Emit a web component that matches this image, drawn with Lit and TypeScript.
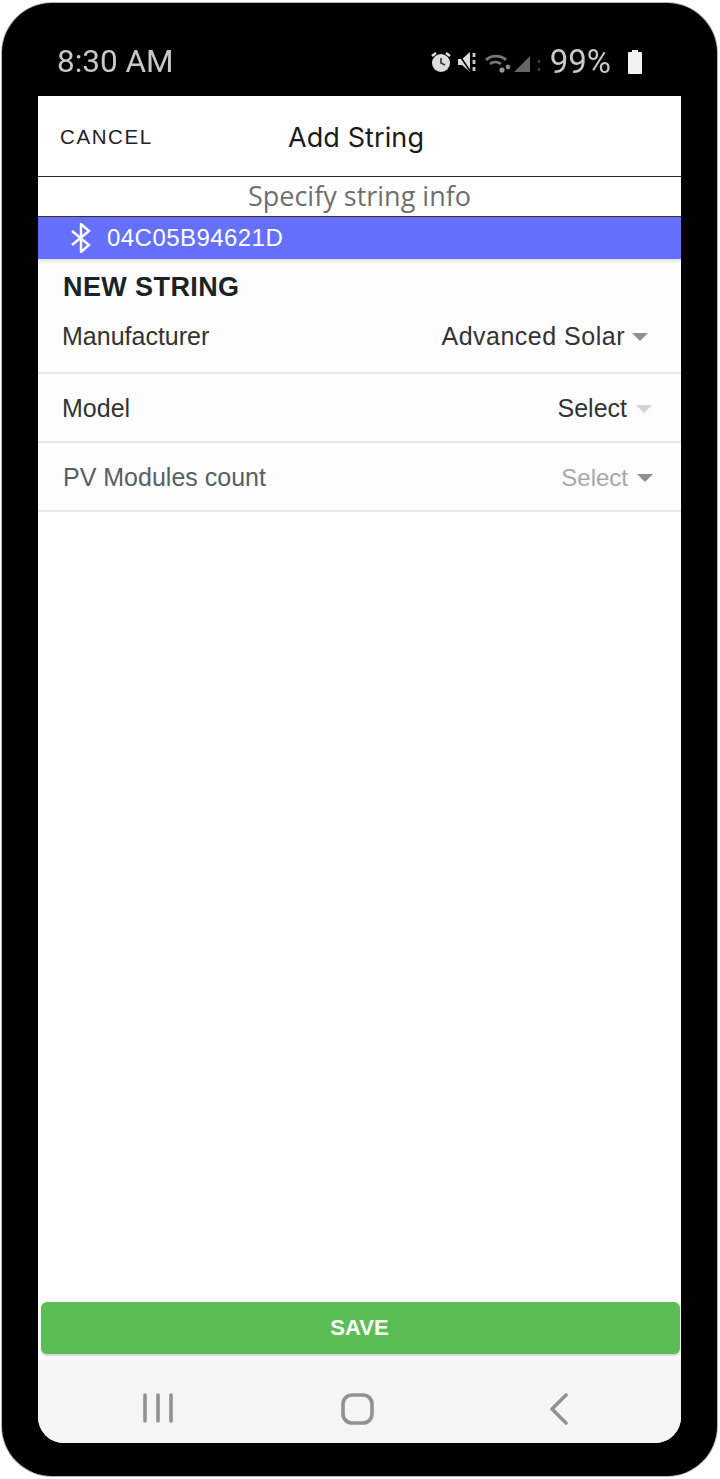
import { LitElement, css, html } from 'lit';
import { customElement } from 'lit/decorators.js';

interface FieldRow {
  label: string;
  value: string;
  kind: 'maker' | 'model' | 'count';
}

const ROWS: FieldRow[] = [
  { label: 'Manufacturer', value: 'Advanced Solar', kind: 'maker' },
  { label: 'Model', value: 'Select', kind: 'model' },
  { label: 'PV Modules count', value: 'Select', kind: 'count' },
];

@customElement('app-root')
export class AppRoot extends LitElement {
  static styles = css`
    :host {
      display: block;
      width: 720px;
      height: 1479px;
      background: #fff;
      font-family: 'Liberation Sans', Arial, sans-serif;
      overflow: hidden;
    }
    .phone {
      box-sizing: border-box;
      width: 715px;
      height: 1473px;
      margin: 3px 0 0 2px;
      padding: 0 36px 33px;
      display: flex;
      flex-direction: column;
      background: #000;
      border-radius: 50px;
      box-shadow: 0 0 0 1px #b5b5b5;
    }
    .status {
      flex: 0 0 93px;
      display: flex;
      align-items: center;
      justify-content: space-between;
      padding: 24px 38px 0 19px;
      box-sizing: border-box;
      color: #c8c8c8;
      filter: blur(0.7px);
    }
    .time {
      font: 400 31.5px Roboto, sans-serif;
    }
    .status-right {
      display: flex;
      align-items: center;
    }
    .status-right svg {
      display: block;
    }
    .pct {
      font: 400 33px Roboto, sans-serif;
      margin: 0 16px 0 5px;
    }
    .screen {
      flex: 1;
      display: flex;
      flex-direction: column;
      background: #fff;
      border-radius: 0 0 26px 26px;
      overflow: hidden;
      min-height: 0;
    }
    .top {
      flex: 0 0 80px;
      display: flex;
      align-items: center;
      position: relative;
      border-bottom: 1px solid #2a2a2a;
      box-sizing: content-box;
    }
    .cancel {
      margin: 2px 0 0 22px;
      font-size: 20.5px;
      letter-spacing: 1.6px;
      color: #222;
    }
    .title {
      position: absolute;
      left: 250px;
      top: 25px;
      font: 400 27px Inter, sans-serif;
      letter-spacing: 0.1px;
      color: #1b1b1b;
    }
    .hint {
      flex: 0 0 39px;
      text-align: center;
      font: 400 27px/38px 'Open Sans', sans-serif;
      color: #6f6f6f;
      border-bottom: 1px solid #333;
    }
    .device {
      flex: 0 0 42px;
      display: flex;
      align-items: center;
      gap: 15px;
      padding-left: 32px;
      background: #6571fe;
      color: #fff;
      font-size: 24px;
      letter-spacing: 0.45px;
      box-shadow: 0 2px 3px rgba(0, 0, 0, 0.12);
      position: relative;
    }
    .content {
      flex: 1;
      display: flex;
      flex-direction: column;
      min-height: 0;
    }
    h2 {
      margin: 0;
      padding: 13px 0 0 25px;
      height: 36px;
      box-sizing: content-box;
      font-size: 27px;
      line-height: 30px;
      font-weight: 700;
      letter-spacing: 0.4px;
      color: #1a2423;
      background: #fdfdfd;
    }
    .row {
      display: flex;
      align-items: center;
      justify-content: space-between;
      box-sizing: border-box;
      height: 69px;
      padding: 2px 29px 0 24px;
      border-bottom: 2px solid #e8e8e6;
      background: #fdfdfd;
      font-size: 25px;
      color: #333;
    }
    .row.maker {
      height: 66px;
      padding-top: 0;
      padding-bottom: 7px;
      padding-right: 33px;
    }
    .row.maker .val {
      letter-spacing: 0.5px;
      gap: 7px;
    }
    .row.model {
      padding-right: 29px;
    }
    .row.count {
      padding-left: 25px;
      color: #585e66;
      padding-right: 28px;
    }
    .row.count .val {
      color: #a8a8a4;
      font-size: 24px;
    }
    .val {
      display: flex;
      align-items: center;
      gap: 9px;
    }
    .caret {
      width: 0;
      height: 0;
      border-left: 8px solid transparent;
      border-right: 8px solid transparent;
      border-top: 8px solid #8f8f8f;
    }
    .model .caret {
      border-top-color: #d2d2d2;
    }
    .spacer {
      flex: 1;
      background: #fff;
    }
    .save {
      flex: 0 0 auto;
      box-sizing: border-box;
      height: 52px;
      margin: 0 1px 0 3px;
      border: 0;
      border-radius: 6px;
      background: #5dbd55;
      box-shadow: 0 2px 2px rgba(0, 0, 0, 0.18);
      color: #fff;
      font: 700 22px 'Liberation Sans', sans-serif;
      padding: 0 2px 0 0;
    }
    .nav {
      flex: 0 0 83px;
      margin-top: 6px;
      background: #f5f5f5;
      position: relative;
      filter: blur(0.4px);
    }
    .nav svg {
      position: absolute;
      top: 33px;
    }
  `;

  render() {
    return html`
      <div class="phone">
        <div class="status">
          <span class="time">8:30 AM</span>
          <div class="status-right">
            <svg width="114" height="24" viewBox="0 0 114 24" fill="none">
              <circle cx="10" cy="13" r="9" fill="#ddd" />
              <path d="M10 8v5l4 2" stroke="#333" stroke-width="1.6" />
              <path d="M1 6l4-3M19 6l-4-3" stroke="#ddd" stroke-width="2.6" />
              <path d="M27 9h4l8-7v20l-8-7h-4z" fill="#ddd" />
              <path d="M27 3l12 18" stroke="#000" stroke-width="1.5" />
              <path d="M43 3v4M43 10v4M43 17v4" stroke="#ccc" stroke-width="2.8" />
              <path d="M55 10a15 15 0 0 1 20 0M59 14a9 9 0 0 1 11 0" stroke="#777" stroke-width="2.8" />
              <circle cx="71" cy="20" r="2.6" fill="#999" />
              <circle cx="77" cy="17" r="2.4" fill="#888" />
              <path d="M83 22L99 6v16z" fill="#666" />
              <path d="M108 10v3M108 18v3" stroke="#444" stroke-width="2" />
            </svg>
            <span class="pct">99%</span>
            <svg width="16" height="24" viewBox="0 0 16 24">
              <path d="M5 0h6v2h3a1 1 0 0 1 1 1v20a1 1 0 0 1-1 1H2a1 1 0 0 1-1-1V3a1 1 0 0 1 1-1h3z" fill="#f2f2f2" />
            </svg>
          </div>
        </div>
        <div class="screen">
          <div class="top">
            <span class="cancel">CANCEL</span>
            <span class="title">Add String</span>
          </div>
          <div class="hint">Specify string info</div>
          <div class="device">
            <svg width="22" height="30" viewBox="0 0 22 30" fill="none" stroke="#fff" stroke-width="2.4">
              <path d="M2 8l17 14-8 7V1l8 7L2 22" />
            </svg>
            <span>04C05B94621D</span>
          </div>
          <div class="content">
            <h2>NEW STRING</h2>
            ${ROWS.map(
              (r) => html`
                <div class="row ${r.kind}">
                  <span>${r.label}</span>
                  <span class="val">${r.value}<i class="caret"></i></span>
                </div>
              `,
            )}
            <div class="spacer"></div>
            <button class="save">SAVE</button>
            <div class="nav">
              <svg style="left:104px" width="32" height="30" viewBox="0 0 32 30" fill="none" stroke="#929292" stroke-width="3.6" stroke-linecap="round">
                <path d="M3 2v26M16 2v26M29 2v26" />
              </svg>
              <svg style="left:303px" width="34" height="32" viewBox="0 0 34 32" fill="none" stroke="#929292" stroke-width="3.6">
                <rect x="2" y="2" width="29" height="28" rx="9" />
              </svg>
              <svg style="left:510px" width="22" height="32" viewBox="0 0 22 32" fill="none" stroke="#929292" stroke-width="3.6" stroke-linecap="round" stroke-linejoin="round">
                <path d="M18 2L4 16l14 14" />
              </svg>
            </div>
          </div>
        </div>
      </div>
    `;
  }
}
